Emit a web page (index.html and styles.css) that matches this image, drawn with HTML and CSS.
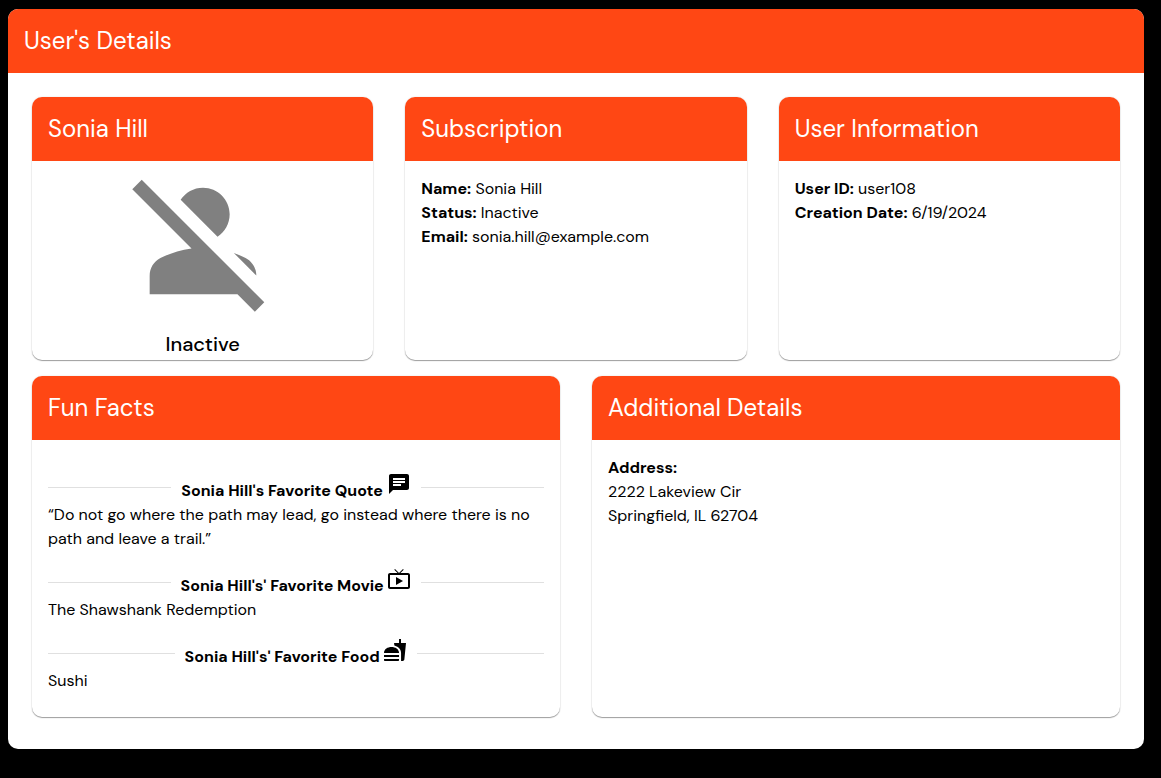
FILE: index.html
```html
<!DOCTYPE html>
<html lang="en">
<head>
<meta charset="utf-8">
<meta name="viewport" content="width=device-width, initial-scale=1">
<title>User's Details</title>
<link rel="stylesheet" href="styles.css">
</head>
<body>
<main class="panel">
  <h1 class="bar">User's Details</h1>
  <div class="content">
    <div class="row row-three">
      <section class="card">
        <h2 class="bar">Sonia Hill</h2>
        <div class="profile">
          <svg class="avatar" viewBox="0 0 24 24" aria-hidden="true"><path d="M8.65 5.82C9.36 4.72 10.6 4 12 4c2.21 0 4 1.79 4 4 0 1.4-.72 2.64-1.82 3.35L8.65 5.82zM20 17.17c-.02-1.1-.63-2.11-1.61-2.62-.54-.28-1.13-.54-1.77-.76L20 17.17zm1.19 4.02L2.81 2.81 1.39 4.22l8.89 8.89c-1.81.23-3.39.79-4.67 1.45-1 .51-1.61 1.54-1.61 2.66V20h13.17l2.61 2.61 1.41-1.42z"/></svg>
          <p class="state">Inactive</p>
        </div>
      </section>
      <section class="card">
        <h2 class="bar">Subscription</h2>
        <div class="body">
          <p><strong>Name:</strong> Sonia Hill</p>
          <p><strong>Status:</strong> Inactive</p>
          <p><strong>Email:</strong> sonia.hill@example.com</p>
        </div>
      </section>
      <section class="card">
        <h2 class="bar">User Information</h2>
        <div class="body">
          <p><strong>User ID:</strong> user108</p>
          <p><strong>Creation Date:</strong> 6/19/2024</p>
        </div>
      </section>
    </div>
    <div class="row row-two">
      <section class="card">
        <h2 class="bar">Fun Facts</h2>
        <div class="body facts">
          <h3 class="divider"><span class="label">Sonia Hill's Favorite Quote <svg class="icon" viewBox="0 0 24 24" aria-hidden="true"><path d="M20 2H4c-1.1 0-1.99.9-1.99 2L2 22l4-4h14c1.1 0 2-.9 2-2V4c0-1.1-.9-2-2-2zM6 9h12v2H6V9zm8 5H6v-2h8v2zm4-6H6V6h12v2z"/></svg></span></h3>
          <p>“Do not go where the path may lead, go instead where there is no path and leave a trail.”</p>
          <h3 class="divider"><span class="label">Sonia Hill's' Favorite Movie <svg class="icon" viewBox="0 0 24 24" aria-hidden="true"><path d="M21 6h-7.59l3.29-3.29L16 2l-4 4-4-4-.7.71L10.59 6H3c-1.1 0-2 .89-2 2v12c0 1.1.9 2 2 2h18c1.1 0 2-.9 2-2V8c0-1.11-.9-2-2-2zm0 14H3V8h18v12zM9 10v8l7-4z"/></svg></span></h3>
          <p>The Shawshank Redemption</p>
          <h3 class="divider"><span class="label">Sonia Hill's' Favorite Food <svg class="icon" viewBox="0 0 24 24" aria-hidden="true"><path d="M18.06 22.99h1.66c.84 0 1.53-.64 1.63-1.46L23 5.05h-5V1h-1.97v4.05h-4.97l.3 2.34c1.71.47 3.31 1.32 4.27 2.26 1.44 1.42 2.43 2.89 2.43 5.29v8.05zM1 21.99V21h15.03v.99c0 .55-.45 1-1.01 1H2.01c-.56 0-1.01-.45-1.01-1zm15.03-7c0-8-15.03-8-15.03 0h15.03zM1.02 17h15v2h-15z"/></svg></span></h3>
          <p>Sushi</p>
        </div>
      </section>
      <section class="card">
        <h2 class="bar">Additional Details</h2>
        <div class="body">
          <p><strong>Address:</strong></p>
          <p>2222 Lakeview Cir</p>
          <p>Springfield, IL 62704</p>
        </div>
      </section>
    </div>
  </div>
</main>
</body>
</html>
```
FILE: styles.css
```css
* {
  box-sizing: border-box;
}

body {
  margin: 0;
  padding: 9px 17px 9px 8px;
  background: #000;
  color: #000;
  font-family: "DM Sans", Inter, "Liberation Sans", sans-serif;
  font-size: 16px;
  line-height: 24px;
}

h1, h2, h3, p {
  margin: 0;
}

strong {
  font-weight: 700;
}

.panel {
  background: #fff;
  border-radius: 10px;
  overflow: hidden;
}

.bar {
  padding: 16px;
  background: #ff4714;
  color: #fff;
  font-size: 24px;
  font-weight: 400;
  line-height: 32px;
}

.content {
  display: grid;
  gap: 16px;
  padding: 24px 24px 32px;
}

.row {
  display: grid;
  gap: 32px;
}

.row-three {
  grid-template-columns: repeat(3, 1fr);
}

.row-two {
  grid-template-columns: repeat(2, 1fr);
}

.card {
  background: #fff;
  border-radius: 10px;
  box-shadow: 0 0 2px rgba(0, 0, 0, 0.12), 0 1px 1px rgba(0, 0, 0, 0.36);
  overflow: hidden;
}

.body {
  padding: 16px;
}

.profile {
  display: flex;
  flex-direction: column;
  align-items: center;
  gap: 7px;
}

.avatar {
  width: 160px;
  height: 160px;
  fill: #808080;
}

.state {
  font-size: 20px;
  font-weight: 500;
  line-height: 32px;
}

.facts {
  padding-bottom: 24px;
}

.divider {
  display: flex;
  align-items: center;
  margin-top: 16px;
  font-size: 16px;
  font-weight: 700;
}

.divider::before,
.divider::after {
  content: "";
  flex: 1;
  border-top: 1px solid #e0e0e0;
}

.label {
  padding: 0 10px;
}

.icon {
  width: 24px;
  height: 24px;
}
```
